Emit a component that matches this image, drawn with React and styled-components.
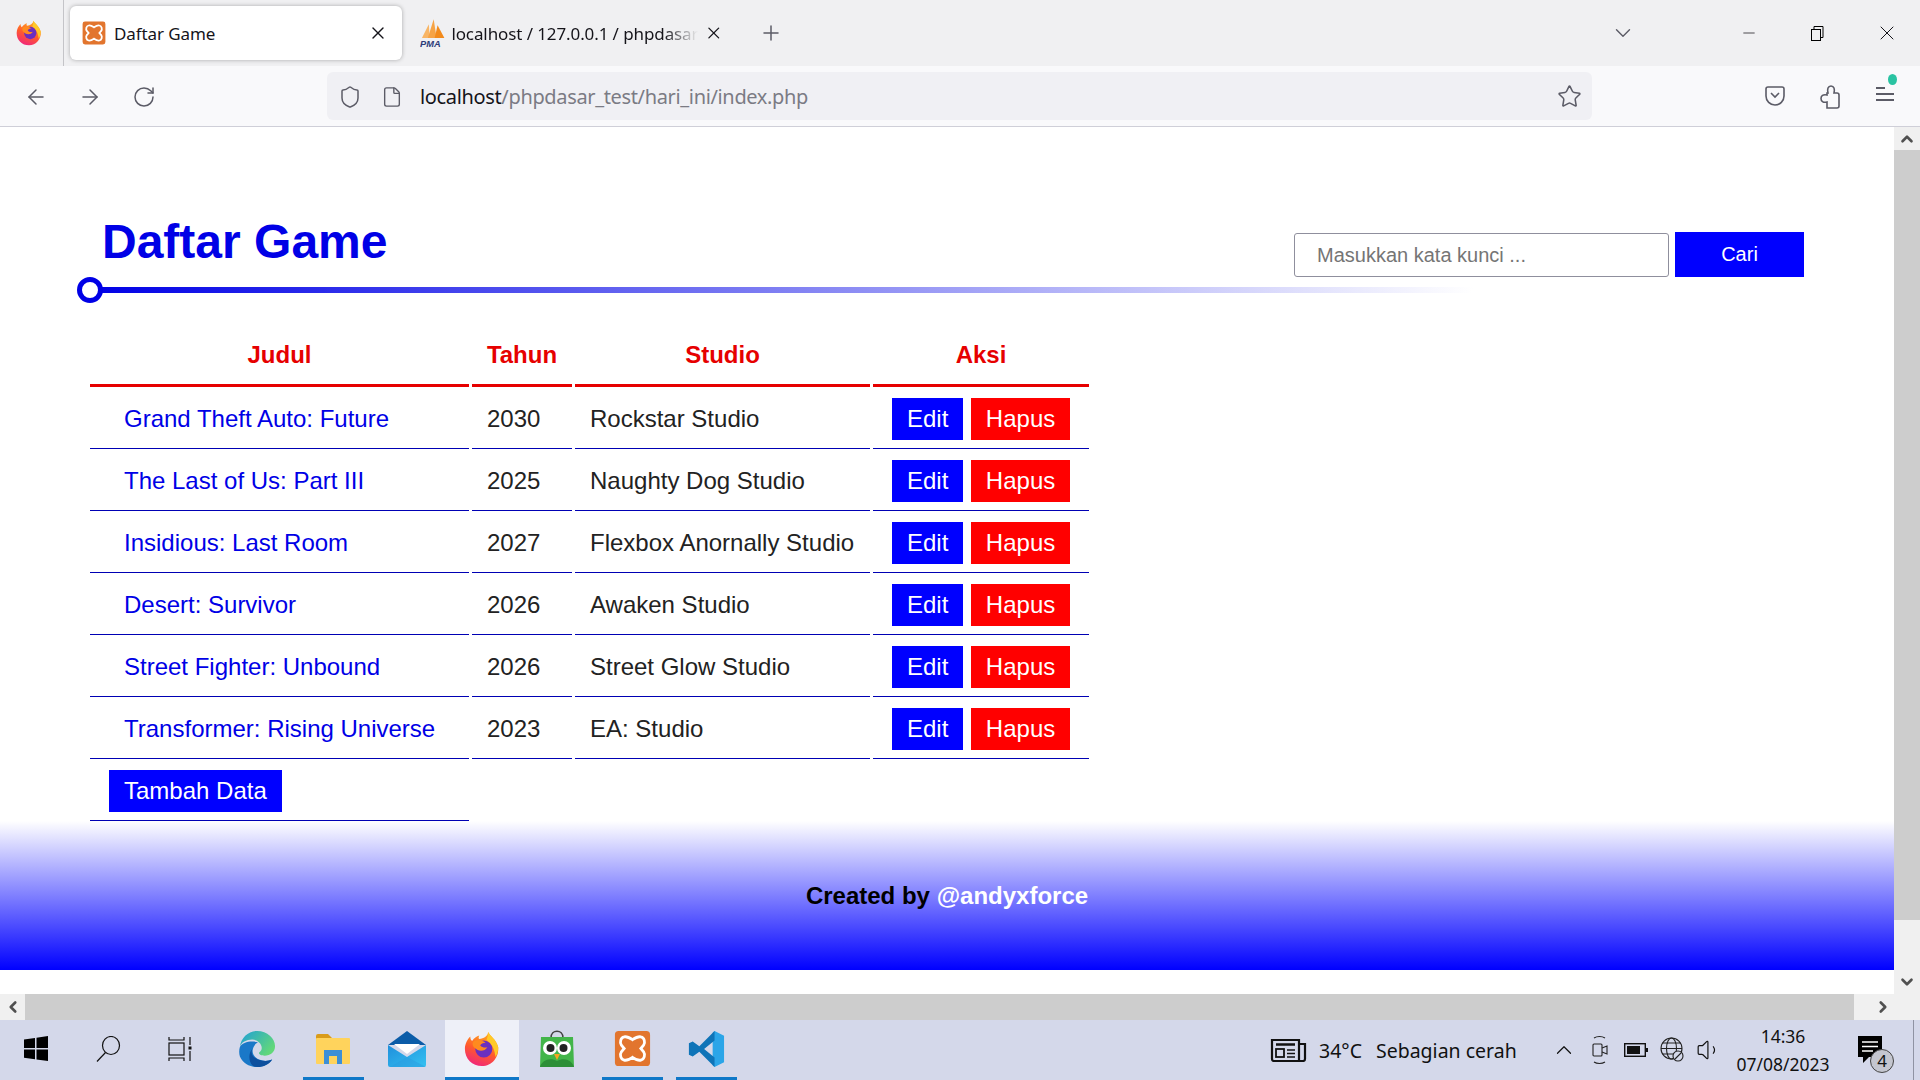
import React from 'react';
import styled, { createGlobalStyle } from 'styled-components';
import {
  ArrowLeft, ArrowRight, RotateCw, Shield, File, Star, X, Plus, ChevronDown, ChevronUp,
  ChevronLeft, ChevronRight, Minus, Volume1,
} from 'lucide-react';

const GlobalStyle = createGlobalStyle`
  * { box-sizing: border-box; }
  html, body { margin: 0; padding: 0; height: 100%; overflow: hidden; background: #fff; }
  body { font-family: "Liberation Sans", Arial, sans-serif; }
`;

const games = [
  { judul: 'Grand Theft Auto: Future', tahun: 2030, studio: 'Rockstar Studio' },
  { judul: 'The Last of Us: Part III', tahun: 2025, studio: 'Naughty Dog Studio' },
  { judul: 'Insidious: Last Room', tahun: 2027, studio: 'Flexbox Anornally Studio' },
  { judul: 'Desert: Survivor', tahun: 2026, studio: 'Awaken Studio' },
  { judul: 'Street Fighter: Unbound', tahun: 2026, studio: 'Street Glow Studio' },
  { judul: 'Transformer: Rising Universe', tahun: 2023, studio: 'EA: Studio' },
];

const Screen = styled.div`
  width: 1920px;
  height: 1080px;
  display: flex;
  flex-direction: column;
  overflow: hidden;
`;

/* browser chrome */
const TabBar = styled.div`
  height: 66px;
  background: #f0f0f2;
  display: flex;
  align-items: center;
  font-family: "Noto Sans", sans-serif;
  color: #15141a;
`;

const AppMenu = styled.div`
  width: 64px;
  height: 66px;
  border-right: 1px solid #c4c4c8;
  display: flex;
  align-items: center;
  justify-content: center;
  padding-right: 6px;
`;

const ActiveTab = styled.div`
  width: 332px;
  height: 54px;
  margin-left: 6px;
  background: #fff;
  border-radius: 6px;
  box-shadow: 0 0 4px rgba(0, 0, 0, 0.3);
  display: flex;
  align-items: center;
  padding: 0 14px 0 12px;
  gap: 8px;
`;

const OtherTab = styled.div`
  width: 322px;
  display: flex;
  align-items: center;
  padding-left: 18px;
  gap: 6px;
`;

const TabTitle = styled.span`
  font-size: 17px;
  letter-spacing: -0.1px;
  white-space: nowrap;
  flex: 1;
  ${(p) => p.$fade && 'mask-image: linear-gradient(to right, #000 86%, transparent 100%);'}
`;

const PlusSlot = styled.div`
  width: 94px;
  display: flex;
  justify-content: center;
`;

const TabRight = styled.div`
  margin-left: auto;
  display: flex;
  align-items: center;
`;

const ControlSlot = styled.div`
  width: ${(p) => p.$w}px;
  display: flex;
  justify-content: center;
`;

const NavBar = styled.div`
  height: 61px;
  background: #f9f9fb;
  border-bottom: 1px solid #cfcfd8;
  display: flex;
  align-items: center;
  color: #5b5b66;
`;

const NavButton = styled.div`
  width: 54px;
  padding-top: 2px;
  display: flex;
  justify-content: center;
`;

const NavGroup = styled.div`
  width: 327px;
  padding-left: 9px;
  display: flex;
`;

const UrlBar = styled.div`
  width: 1265px;
  height: 48px;
  background: #f0f0f4;
  border-radius: 6px;
  display: flex;
  align-items: center;
  padding: 1px 10px 0 11px;
  gap: 19px;
`;

const UrlText = styled.div`
  flex: 1;
  margin-left: -2px;
  font-family: "Noto Sans", sans-serif;
  font-size: 20px;
  color: #7b7b84;
  letter-spacing: -0.35px;
  strong { font-weight: 400; color: #15141a; }
`;

const NavRight = styled.div`
  flex: 1;
  display: flex;
  justify-content: flex-end;
  padding-right: 8px;
`;

const MenuButton = styled.div`
  position: relative;
  width: 55px;
  padding-top: 2px;
  display: flex;
  justify-content: center;
`;

const UpdateDot = styled.span`
  position: absolute;
  top: -9px;
  right: 15px;
  width: 9px;
  height: 11px;
  border-radius: 50%;
  background: #2ac3a2;
`;

/* page */
const Viewport = styled.div`
  height: 867px;
  display: flex;
`;

const Page = styled.div`
  flex: 1;
  min-width: 0;
  background: #fff;
  display: flex;
  flex-direction: column;
`;

const Main = styled.main`
  padding: 88px 90px 0;
`;

const Header = styled.header`
  height: 62px;
  display: flex;
  justify-content: space-between;
  align-items: flex-end;
`;

const Title = styled.h1`
  margin: 0 0 8px 12px;
  font-size: 48px;
  line-height: 55px;
  font-weight: 700;
  color: #0000e6;
`;

const SearchForm = styled.form`
  display: flex;
  align-items: flex-end;
  gap: 6px;
`;

const SearchInput = styled.input`
  width: 375px;
  height: 44px;
  padding: 0 22px;
  border: 1px solid #8f8f9d;
  border-radius: 3px;
  background: #fff;
  font-family: inherit;
  font-size: 20px;
  &::placeholder { color: #757575; opacity: 1; }
`;

const SearchButton = styled.button`
  width: 129px;
  height: 45px;
  border: none;
  background: #0000ff;
  color: #fff;
  font-family: inherit;
  font-size: 20px;
`;

const Divider = styled.div`
  position: relative;
  width: 1383px;
  height: 6px;
  margin: 10px 0 30px;
  background: linear-gradient(to right, #0000e6, #fff);
`;

const DividerDot = styled.span`
  position: absolute;
  left: -13px;
  top: -10px;
  width: 26px;
  height: 26px;
  border-radius: 50%;
  border: 5px solid #0000e6;
  background: #fff;
`;

const GameTable = styled.table`
  margin-left: -3px;
  border-collapse: separate;
  border-spacing: 3px 0;
  table-layout: fixed;
  width: 1005px;
  font-size: 24px;
  color: #222;
`;

const Th = styled.th`
  width: ${(p) => p.$w}px;
  height: 64px;
  padding: 2px 0 0;
  border-bottom: 3px solid #e60000;
  color: #e60000;
  font-size: 24px;
  font-weight: 700;
  text-align: center;
`;

const Td = styled.td`
  height: 62px;
  padding: 2px 0 0 ${(p) => p.$pad ?? 15}px;
  border-bottom: 1px solid #0000b4;
  white-space: nowrap;
`;

const GameLink = styled.a`
  color: #0000e6;
  text-decoration: none;
`;

const ActionRow = styled.div`
  display: flex;
  gap: 7.500px;
`;

const ActionButton = styled.a`
  height: 42px;
  padding: 0 15px;
  display: inline-flex;
  align-items: center;
  color: #fff;
  background: ${(p) => p.$bg};
  font-size: 24px;
`;

const Footer = styled.footer`
  height: 149px;
  background: linear-gradient(to bottom, #fff, #0000ff);
  display: flex;
  justify-content: center;
  align-items: center;
  padding-top: 1px;
  font-size: 24px;
  font-weight: 700;
  color: #000;
  a { color: #fff; text-decoration: none; }
`;

const VScroll = styled.div`
  width: 26px;
  background: #f0f0f0;
  display: flex;
  flex-direction: column;
  align-items: center;
  color: #505050;
`;

const ScrollCap = styled.div`
  height: 23px;
  display: flex;
  align-items: center;
  justify-content: center;
`;

const VThumb = styled.div`
  width: 100%;
  height: 770px;
  background: #cdcdcd;
`;

const VTrack = styled.div`
  flex: 1;
  display: flex;
  align-items: flex-end;
  padding-bottom: 3px;
`;

const HScroll = styled.div`
  height: 26px;
  background: #f0f0f0;
  display: flex;
  align-items: center;
  color: #505050;
`;

const HCap = styled.div`
  width: ${(p) => p.$w}px;
  display: flex;
  justify-content: center;
`;

const HThumb = styled.div`
  width: 1829px;
  height: 100%;
  background: #cdcdcd;
`;

const HEnd = styled.div`
  flex: 1;
  display: flex;
  justify-content: flex-start;
  padding-left: 20px;
`;

/* taskbar */
const Taskbar = styled.div`
  height: 60px;
  background: #d4d8ea;
  display: flex;
  font-family: "Noto Sans", sans-serif;
  color: #111;
`;

const TaskSlot = styled.div`
  position: relative;
  width: ${(p) => p.$w}px;
  height: 60px;
  padding-bottom: 3px;
  display: flex;
  align-items: center;
  justify-content: center;
  background: ${(p) => (p.$active ? '#eef0f8' : 'transparent')};
  ${(p) => p.$bar && `
    &::after {
      content: '';
      position: absolute;
      bottom: 0;
      left: calc(50% - ${p.$bar / 2}px);
      width: ${p.$bar}px;
      height: 3px;
      background: #0f78c8;
    }
  `}
`;

const Tray = styled.div`
  margin-left: auto;
  display: flex;
  align-items: center;
  height: 60px;
`;

const TrayItem = styled.div`
  position: relative;
  width: ${(p) => p.$w}px;
  padding-left: ${(p) => p.$shift ?? 0}px;
  display: flex;
  justify-content: center;
  align-items: center;
`;

const Weather = styled.div`
  width: 227px;
  display: flex;
  gap: 14px;
  font-size: 19.500px;
  padding-left: 1px;
`;

const Clock = styled.div`
  width: 116px;
  text-align: center;
  font-size: 17.500px;
  line-height: 28px;
`;

const Badge = styled.span`
  position: absolute;
  left: 29px;
  top: 13px;
  width: 24px;
  height: 24px;
  border-radius: 50%;
  border: 1px solid #444;
  background: #c4c6cf;
  font-size: 17px;
  line-height: 22px;
  text-align: center;
  color: #111;
`;

const TrayEdge = styled.div`
  width: 7px;
  height: 60px;
  margin-left: 14px;
  border-left: 1px solid #8f93a3;
`;

/* drawings */
const FirefoxLogo = ({ size, id }) => (
  <svg width={size} height={size} viewBox="0 0 40 40">
    <defs>
      <linearGradient id={`ff-${id}`} x1="0.7" y1="0" x2="0.3" y2="1">
        <stop offset="0" stopColor="#ffb01f" />
        <stop offset="0.55" stopColor="#ff5a2c" />
        <stop offset="1" stopColor="#f0247e" />
      </linearGradient>
    </defs>
    <path d="M27 1c1 4 9 8 11 17 1 11-7 21-18 21C9 39 1 31 1 20 1 14 4 9 7 6c0 3 1 4 2 5 2-3 5-5 8-6-1 2-1 3 0 4 5-1 9-3 10-8z" fill={`url(#ff-${id})`} />
    <path d="M27 1c1 4 9 8 11 17 0 4-1 8-3 11-1-8-3-14-10-19 1-3 2-6 2-9z" fill="#ffc928" />
    <circle cx="22" cy="20" r="9.500" fill="#6b2fbf" />
    <path d="M11 11c4-2 9-1 13 2-3 0-5 1-6 3 2 2 5 3 8 2-3 5-10 5-14 1-3-3-3-6-1-8z" fill="#ff8a1f" />
  </svg>
);

const XamppLogo = ({ size }) => (
  <svg width={size} height={size} viewBox="0 0 40 40">
    <rect x="1" y="1" width="38" height="38" rx="4" fill="#e2752e" />
    <path d="M11 7.500c3-1 6 1 9 3 3-2 6-4 9-3 4 1 5 6 3 9l-3 3.500 3 3.500c2 3 1 8-3 9-3 1-6-1-9-3-3 2-6 4-9 3-4-1-5-6-3-9l3-3.500-3-3.500c-2-3-1-8 3-9z" fill="none" stroke="#fff" strokeWidth="3" />
  </svg>
);

const PmaLogo = () => (
  <svg width="26" height="29" viewBox="0 0 26 29">
    <path d="M2 19L9 5l1 14z" fill="#f8b565" />
    <path d="M8 19L14 0l3 19z" fill="#f6a345" />
    <path d="M15 19L18 6l7 13z" fill="#f28a1b" />
    <text x="0" y="28" fontFamily="Liberation Sans" fontWeight="700" fontStyle="italic" fontSize="9.500" fill="#2c3a78">PMA</text>
  </svg>
);

const WindowsLogo = () => (
  <svg width="24" height="25" viewBox="0 0 24 25">
    <path d="M0 3.500L11 2v10H0zM12.500 1.700L24 0v12H12.500zM0 13.500h11v9.800L0 21.800zM12.500 13.500H24V25l-11.500-1.600z" fill="#000" />
  </svg>
);

const SearchGlyph = () => (
  <svg width="25" height="26" viewBox="0 0 25 26" fill="none" stroke="#111" strokeWidth="1.200">
    <ellipse cx="15" cy="9.500" rx="8.500" ry="9" />
    <path d="M9.500 16.500L1 25.500" />
  </svg>
);

const TaskView = () => (
  <svg width="25" height="24" viewBox="0 0 25 24" fill="none" stroke="#111" strokeWidth="1.200">
    <path d="M1 0v3h15V0M1 24v-3h15v3" />
    <rect x="1" y="6" width="15" height="12" />
    <path d="M22 0v8M22 14v10" />
    <rect x="20.500" y="9.500" width="3" height="3" fill="#111" stroke="none" />
  </svg>
);

const EdgeLogo = () => (
  <svg width="38" height="38" viewBox="0 0 40 40">
    <defs>
      <linearGradient id="edge-top" x1="0" y1="0" x2="1" y2="0.6">
        <stop offset="0" stopColor="#1f9fd8" />
        <stop offset="1" stopColor="#62d87a" />
      </linearGradient>
    </defs>
    <path d="M2 18C3 8 11 1 20 1c11 0 19 8 19 16 0 6-5 10-11 10-3 0-6-1-6-3 1-1 3-2 3-5 0-5-5-9-10-9C9 10 3 13 2 18z" fill="url(#edge-top)" />
    <path d="M2 18c-1 3-1 7 0 10 3 7 10 11 18 11 7 0 12-3 16-8-4 2-9 2-14 0-5-2-8-7-6-12 1-3 3-5 5-6-7-2-17 0-19 5z" fill="#1a78c8" />
    <path d="M15 20c-2 5 1 9 6 11 5 2 10 2 15 0-3 5-9 8-16 8-3 0-6-2-7-5-2-5-1-11 2-14z" fill="#0c4f9e" />
  </svg>
);

const FilesLogo = () => (
  <svg width="34" height="34" viewBox="0 0 34 34">
    <path d="M0 4a2 2 0 012-2h10l4 4v3H0z" fill="#d99b1a" />
    <rect y="6" width="34" height="26" rx="1" fill="#ffd35c" />
    <path d="M8 32V18h18v14h-5v-8h-8v8z" fill="#3d8fd6" />
  </svg>
);

const MailLogo = () => (
  <svg width="38" height="36" viewBox="0 0 38 36">
    <defs>
      <linearGradient id="mail-body" x1="0" y1="0" x2="1" y2="1">
        <stop offset="0" stopColor="#1f8fdc" />
        <stop offset="1" stopColor="#35c1f1" />
      </linearGradient>
    </defs>
    <path d="M19 0l19 14H0z" fill="#0b5ca8" />
    <path d="M6 13h26L19 23z" fill="#fff" />
    <path d="M0 14l19 12 19-12v20a2 2 0 01-2 2H2a2 2 0 01-2-2z" fill="url(#mail-body)" />
    <path d="M19 26l19 10H2z" fill="#2a9be0" opacity="0.5" />
  </svg>
);

const OwlLogo = () => (
  <svg width="34" height="37" viewBox="0 0 34 37">
    <path d="M11 8c0-9 12-9 12 0" fill="none" stroke="#444" strokeWidth="1.600" />
    <path d="M1 7h32l1 30H0z" fill="#42b549" />
    <path d="M0 37c2-7 10-10 17-6 7-4 15-1 17 6z" fill="#2c8f37" />
    <circle cx="10" cy="18" r="7" fill="#fff" />
    <circle cx="24" cy="18" r="7" fill="#fff" />
    <circle cx="10.500" cy="18" r="4" fill="#222" />
    <circle cx="23.500" cy="18" r="4" fill="#222" />
    <path d="M14 24h6l-3 6z" fill="#f5a623" />
  </svg>
);

const CodeLogo = () => (
  <svg width="38" height="38" viewBox="0 0 40 40">
    <path d="M29 1l10 5v28l-10 5-2-2V3z" fill="#2ba5e8" />
    <path d="M29 1L13 17 6 12 2 14v12l4 2 7-5 16 16V29L18 20 29 11z" fill="#0f74b8" />
  </svg>
);

const PuzzleGlyph = () => (
  <svg width="20" height="24" viewBox="0 0 20 24" fill="none" stroke="currentColor" strokeWidth="1.600">
    <path d="M7 23v-6c-4 1-6-1-6-3.500S3 9 7 10V8h1C7 4 8 1 11 1s4 3 3 7h3a2 2 0 012 2v11a2 2 0 01-2 2z" />
  </svg>
);

const NewsIcon = () => (
  <svg width="37" height="24" viewBox="0 0 37 24" fill="none" stroke="#111" strokeWidth="2.200">
    <path d="M2 2h27v21H4a2 2 0 01-2-2zM29 6h6v15a2 2 0 01-2 2h-4" />
    <path d="M6 6.500h19" strokeWidth="2.500" />
    <rect x="6" y="11" width="8" height="8" strokeWidth="1.800" />
    <path d="M17 12h8M17 15.500h8M17 19h8" strokeWidth="1.600" />
  </svg>
);

const CameraIcon = () => (
  <svg width="16" height="30" viewBox="0 0 16 30" fill="none" stroke="#222" strokeWidth="1.100">
    <rect x="1" y="9" width="9" height="12" rx="1" />
    <path d="M10 13l5-2v8l-5-2M2 3c3-2 8-2 11 0M2 27c3 2 8 2 11 0" />
  </svg>
);

const BatteryIcon = () => (
  <svg width="24" height="14" viewBox="0 0 24 14">
    <rect x="0.700" y="0.700" width="20.600" height="12.600" fill="none" stroke="#111" strokeWidth="1.400" />
    <rect x="3" y="3" width="13" height="8" fill="#111" />
    <rect x="22" y="5" width="2" height="4" fill="#111" />
  </svg>
);

const NoticeIcon = () => (
  <svg width="24" height="28" viewBox="0 0 24 28">
    <path d="M0 0h24v21H11l-6 6v-6H0z" fill="#000" />
    <path d="M4 6h16M4 10.500h16M4 15h11" stroke="#fff" strokeWidth="1.400" />
  </svg>
);

const TrayGlobe = () => (
  <svg width="24" height="26" viewBox="0 0 24 26" fill="none" stroke="#222" strokeWidth="1.100">
    <circle cx="11.500" cy="11.500" r="10.500" />
    <ellipse cx="11.500" cy="11.500" rx="5" ry="10.500" />
    <path d="M1 11.500h21M2.500 6h18M2.500 17h18" />
    <circle cx="18" cy="19" r="5" fill="#d4d8ea" />
    <path d="M15 22l6-6" />
  </svg>
);

const App = () => (
  <Screen>
    <GlobalStyle />
    <TabBar>
      <AppMenu><FirefoxLogo size={26} id="menu" /></AppMenu>
      <ActiveTab>
        <XamppLogo size={24} />
        <TabTitle>Daftar Game</TabTitle>
        <X size={20} strokeWidth={1.6} />
      </ActiveTab>
      <OtherTab>
        <PmaLogo />
        <TabTitle $fade>localhost / 127.0.0.1 / phpdasar</TabTitle>
        <X size={20} strokeWidth={1.6} />
      </OtherTab>
      <PlusSlot><Plus size={24} strokeWidth={1.5} color="#5b5b66" /></PlusSlot>
      <TabRight>
        <ControlSlot $w={190}><ChevronDown size={26} strokeWidth={1.3} color="#5b5b66" /></ControlSlot>
        <ControlSlot $w={62}><Minus size={18} strokeWidth={1} /></ControlSlot>
        <ControlSlot $w={74}>
          <svg width="16" height="16" viewBox="0 0 16 16" fill="none" stroke="#000" strokeWidth="1">
            <rect x="2.500" y="4.500" width="9" height="11" />
            <path d="M5 4.500v-3h9v11h-2.500" />
          </svg>
        </ControlSlot>
        <ControlSlot $w={66}><X size={24} strokeWidth={1} /></ControlSlot>
      </TabRight>
    </TabBar>

    <NavBar>
      <NavGroup>
        <NavButton><ArrowLeft size={24} strokeWidth={1.5} /></NavButton>
        <NavButton><ArrowRight size={24} strokeWidth={1.5} /></NavButton>
        <NavButton><RotateCw size={24} strokeWidth={1.5} /></NavButton>
      </NavGroup>
      <UrlBar>
        <Shield size={24} strokeWidth={1.5} />
        <File size={22} strokeWidth={1.5} />
        <UrlText><strong>localhost</strong>/phpdasar_test/hari_ini/index.php</UrlText>
        <Star size={25} strokeWidth={1.5} />
      </UrlBar>
      <NavRight>
        <MenuButton>
          <svg width="22" height="22" viewBox="0 0 22 22" fill="none" stroke="currentColor" strokeWidth="1.600">
            <path d="M2 4a2 2 0 012-2h14a2 2 0 012 2v7c0 5-4 9-9 9s-9-4-9-9z" />
            <path d="M7 8l4 4 4-4" />
          </svg>
        </MenuButton>
        <MenuButton><PuzzleGlyph /></MenuButton>
        <MenuButton>
          <svg width="20" height="18" viewBox="0 0 20 18" stroke="currentColor" strokeWidth="2">
            <path d="M1 3h9M1 9h18M1 15h18" />
          </svg>
          <UpdateDot />
        </MenuButton>
      </NavRight>
    </NavBar>

    <Viewport>
      <Page>
        <Main>
          <Header>
            <Title>Daftar Game</Title>
            <SearchForm>
              <SearchInput placeholder="Masukkan kata kunci ..." />
              <SearchButton type="button">Cari</SearchButton>
            </SearchForm>
          </Header>
          <Divider><DividerDot /></Divider>
          <GameTable>
            <thead>
              <tr>
                <Th $w={379}>Judul</Th>
                <Th $w={100}>Tahun</Th>
                <Th $w={295}>Studio</Th>
                <Th $w={216}>Aksi</Th>
              </tr>
            </thead>
            <tbody>
              {games.map((game) => (
                <tr key={game.judul}>
                  <Td $pad={34}><GameLink href="#">{game.judul}</GameLink></Td>
                  <Td>{game.tahun}</Td>
                  <Td>{game.studio}</Td>
                  <Td $pad={19}>
                    <ActionRow>
                      <ActionButton $bg="#0000ff">Edit</ActionButton>
                      <ActionButton $bg="#ff0000">Hapus</ActionButton>
                    </ActionRow>
                  </Td>
                </tr>
              ))}
              <tr>
                <Td $pad={19}>
                  <ActionRow>
                    <ActionButton $bg="#0000ff">Tambah Data</ActionButton>
                  </ActionRow>
                </Td>
              </tr>
            </tbody>
          </GameTable>
        </Main>
        <Footer>
          <span>Created by <a href="#">@andyxforce</a></span>
        </Footer>
      </Page>
      <VScroll>
        <ScrollCap><ChevronUp size={18} strokeWidth={3.5} /></ScrollCap>
        <VThumb />
        <VTrack><ChevronDown size={18} strokeWidth={3.5} /></VTrack>
      </VScroll>
    </Viewport>
    <HScroll>
      <HCap $w={25}><ChevronLeft size={18} strokeWidth={3.5} /></HCap>
      <HThumb />
      <HEnd><ChevronRight size={18} strokeWidth={3.5} /></HEnd>
    </HScroll>

    <Taskbar>
      <TaskSlot $w={72}><WindowsLogo /></TaskSlot>
      <TaskSlot $w={72}><SearchGlyph /></TaskSlot>
      <TaskSlot $w={72}><TaskView /></TaskSlot>
      <TaskSlot $w={82}><EdgeLogo /></TaskSlot>
      <TaskSlot $w={70} $bar={61}><FilesLogo /></TaskSlot>
      <TaskSlot $w={77}><MailLogo /></TaskSlot>
      <TaskSlot $w={74} $bar={74} $active><FirefoxLogo size={36} id="task" /></TaskSlot>
      <TaskSlot $w={76}><OwlLogo /></TaskSlot>
      <TaskSlot $w={74} $bar={61}><XamppLogo size={37} /></TaskSlot>
      <TaskSlot $w={74} $bar={61}><CodeLogo /></TaskSlot>
      <Tray>
        <TrayItem $w={60}><NewsIcon /></TrayItem>
        <Weather><span>34°C</span><span>Sebagian cerah</span></Weather>
        <TrayItem $w={38}><ChevronUp size={26} strokeWidth={1.1} /></TrayItem>
        <TrayItem $w={34}><CameraIcon /></TrayItem>
        <TrayItem $w={38}><BatteryIcon /></TrayItem>
        <TrayItem $w={34}><TrayGlobe /></TrayItem>
        <TrayItem $w={36} $shift={4}><Volume1 size={26} strokeWidth={1.1} /></TrayItem>
        <Clock><div>14:36</div><div>07/08/2023</div></Clock>
        <TrayItem $w={58}><NoticeIcon /><Badge>4</Badge></TrayItem>
        <TrayEdge />
      </Tray>
    </Taskbar>
  </Screen>
);

export default App;
